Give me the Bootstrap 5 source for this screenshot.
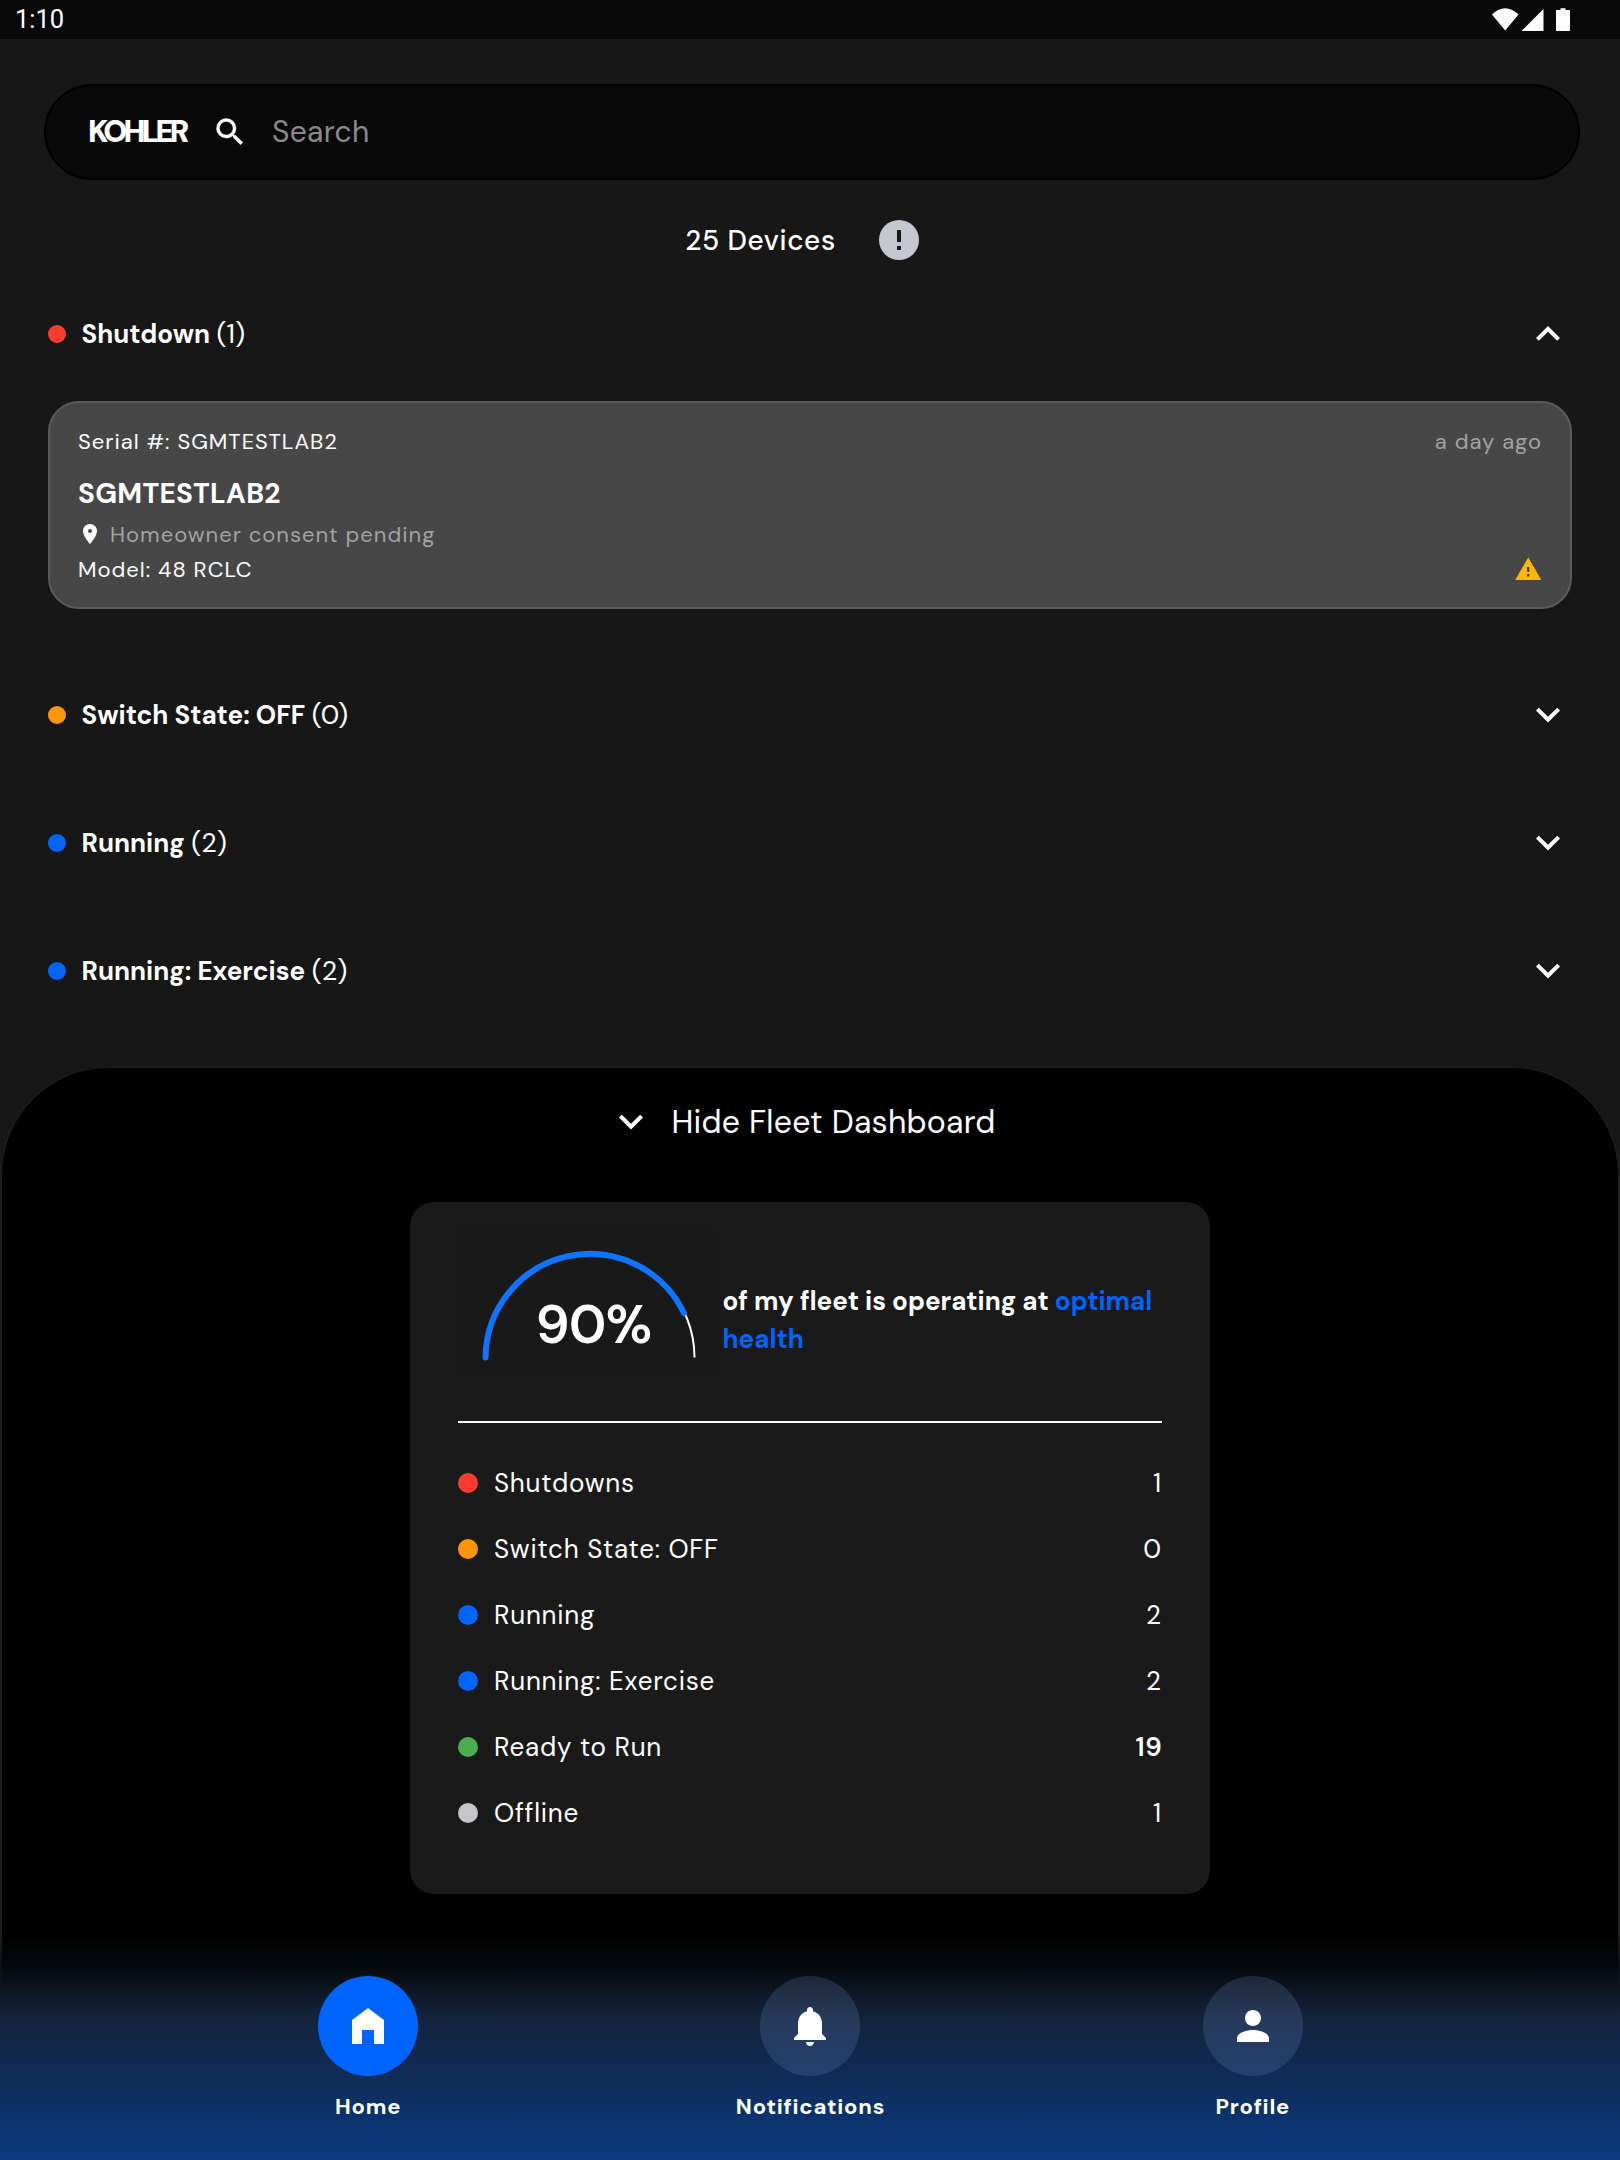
<!DOCTYPE html>
<html lang="en">
<head>
<meta charset="utf-8">
<meta name="viewport" content="width=device-width, initial-scale=1">
<title>Kohler Fleet</title>
<link href="https://cdn.jsdelivr.net/npm/bootstrap@5.3.0/dist/css/bootstrap.min.css" rel="stylesheet">
<style>
body{background:#171717;color:#fff;font-family:"DM Sans",Inter,"Noto Sans",sans-serif;font-size:26px;line-height:1.2;white-space:nowrap}
.screen{width:1620px;height:2160px}
svg{display:block;flex:none}
.status-bar{height:39px;background:#090909;font:400 25.5px/1 Roboto,sans-serif;padding:0 49px 0 15px}
.search-pill{height:96px;margin:45px 40px 0 44px;background:#090909;border:2px solid #000;padding-left:42px}
.search-text{font-size:30px;letter-spacing:.3px;color:#8b8b8b;margin-left:24px}
.brand{width:124px;font-size:30.5px;font-weight:900;letter-spacing:-3.7px}
.summary{height:120px;gap:43px;padding-right:16px;margin-bottom:1px;font-size:28px;font-weight:500;letter-spacing:.62px}
.summary span{padding-top:1px}
.group-head{height:128px;padding:0 48px;font-size:26px}
.group-head.first{height:66px}
.group-head b{margin-left:15.5px;padding-top:2px}
.group-head .count{margin-left:6.5px;font-size:27px;padding-top:1px}
.dot{width:18px;height:18px;border-radius:50%;flex:none}
.dot.big{width:20px;height:20px}
.c-red{background:#ff3b30}.c-orange{background:#ff9500}.c-blue{background:#0064ff}.c-green{background:#4cae4f}.c-grey{background:#c6c6c8}
.device{height:208px;margin:34px 48px 42px;background:#474747;border:2px solid #5b5b5b;border-radius:31px;padding:24px 28px 0;font-size:22px;line-height:30px;letter-spacing:1px;color:#fff}
.device .muted{color:#a3a3a3}
.device .name{font-size:28px;line-height:50px;letter-spacing:.3px;margin-top:12px}
.device .consent{margin-left:8px;padding-top:1px;height:30px}
.device .model{margin-top:5px}
.device .model span{padding-top:1px}
.sheet{background:#000;margin-top:32px;border:2px solid #1d1d1d;border-width:1px 2px 0;border-radius:108px 108px 0 0}
.sheet-head{height:108px;gap:16px;padding-right:17px;font-size:32px;letter-spacing:.26px}
.fleet{width:800px;height:692px;margin:26px auto 0;background:#1a1a1a;border-radius:24px;padding:23px 48px 0}
.gauge-row{height:196px;border-bottom:2px solid #fff;box-sizing:content-box;margin-bottom:27px}
.gauge{margin-left:-1px}
.health-text{font-size:26px;line-height:38px;font-weight:700;padding:57px 0 0 8.5px}
.health-text span{color:#0064ff}
.stat{height:66px;letter-spacing:.78px}
.stat .label{margin-left:16px;padding-top:2px}
.stat .num{letter-spacing:0;margin-right:1px;padding-top:2px}
.stat .num.strong{font-weight:600;letter-spacing:.8px;margin-right:-.5px}
.bottom-bar{height:225px;padding:41px 146px 0 147px;background:linear-gradient(rgba(4,8,14,0) 0,rgba(6,11,17,.8) 32px,#0d1722 56px,#13223a 78px,#112a52 130px,#0c3167 172px,#0b3a82 225px)}
.nav-circle{width:100px;height:100px;background:rgba(130,160,230,.18)}
.nav-circle.on{background:#0064ff}
.nav-label{margin-top:18px;font-size:22px;line-height:26px;font-weight:700;letter-spacing:.78px}
</style>
<script src="https://cdn.jsdelivr.net/npm/bootstrap@5.3.0/dist/js/bootstrap.bundle.min.js"></script>
</head>
<body>
<svg width="0" height="0" class="position-absolute"><defs>
<symbol id="down" viewBox="0 0 24 24"><path d="M7.41 8.34 12 12.92l4.59-4.58L18 9.75l-6 6-6-6z"/></symbol>
<symbol id="up" viewBox="0 0 24 24"><path d="M7.41 15.41 12 10.83l4.59 4.58L18 14l-6-6-6 6z"/></symbol>
</defs></svg>
<div class="screen position-relative overflow-hidden d-flex flex-column">
  <header class="status-bar d-flex align-items-center justify-content-between">
    <span>1:10</span>
    <svg width="79" height="24" viewBox="0 0 79 24" fill="#fff"><path d="M0 6.500Q13 -6 26.500 6.500L13.200 22.500zM29.500 23 51.500 1V23zM64 2.500Q64 2 64.500 2H68.500V.200H73.500V2H77.500Q78 2 78 2.500V22.500Q78 23 77.500 23H64.500Q64 23 64 22.500z"/></svg>
  </header>

  <div class="search-pill rounded-pill d-flex align-items-center">
    <span class="brand">KOHLER</span>
    <svg width="36" height="36" viewBox="0 0 24 24" fill="#fff"><path d="M15.500 14h-.790l-.280-.270A6.471 6.471 0 0 0 16 9.500 6.500 6.500 0 1 0 9.500 16c1.610 0 3.090-.590 4.230-1.570l.270.280v.790l5 4.990L20.490 19zm-6 0C7.010 14 5 11.990 5 9.500S7.010 5 9.500 5 14 7.010 14 9.500 11.990 14 9.500 14z" stroke="#fff" stroke-width=".3"/></svg>
    <span class="search-text">Search</span>
  </div>

  <div class="summary d-flex align-items-center justify-content-center">
    <span>25 Devices</span>
    <svg width="40" height="40" viewBox="0 0 40 40"><circle cx="20" cy="20" r="20" fill="#c6c6d0"/><path d="M18 10h4v12h-4zM18 26h4v4h-4z" fill="#171717"/></svg>
  </div>

  <div class="group-head first d-flex align-items-center">
    <i class="dot c-red"></i><b>Shutdown</b><span class="count">(1)</span>
    <svg class="ms-auto" width="48" height="48" fill="#fff"><use href="#up"/></svg>
  </div>
  <div class="device">
    <div class="d-flex justify-content-between"><span>Serial #: SGMTESTLAB2</span><span class="muted">a day ago</span></div>
    <div class="name fw-bold">SGMTESTLAB2</div>
    <div class="d-flex align-items-center">
      <svg width="24" height="24" viewBox="0 0 24 24" fill="#fff"><path d="M12 2C8.130 2 5 5.130 5 9c0 5.250 7 13 7 13s7-7.750 7-13c0-3.870-3.130-7-7-7zm0 9a2 2 0 1 1 0-4 2 2 0 0 1 0 4z"/></svg>
      <span class="muted consent">Homeowner consent pending</span>
    </div>
    <div class="model d-flex align-items-center justify-content-between"><span>Model: 48 RCLC</span>
      <svg width="28.500" height="28.500" viewBox="0 0 24 24"><path d="M10 9h4v10h-4z" fill="#3a3425"/><path d="M1 21h22L12 2zm11.900-3h-1.800v-2h1.800zm0-4h-1.800v-4h1.800z" fill="#ffb800"/></svg>
    </div>
  </div>
  <div class="group-head d-flex align-items-center">
    <i class="dot c-orange"></i><b>Switch State: OFF</b><span class="count">(0)</span>
    <svg class="ms-auto" width="48" height="48" fill="#fff"><use href="#down"/></svg>
  </div>
  <div class="group-head d-flex align-items-center">
    <i class="dot c-blue"></i><b>Running</b><span class="count">(2)</span>
    <svg class="ms-auto" width="48" height="48" fill="#fff"><use href="#down"/></svg>
  </div>
  <div class="group-head d-flex align-items-center">
    <i class="dot c-blue"></i><b>Running: Exercise</b><span class="count">(2)</span>
    <svg class="ms-auto" width="48" height="48" fill="#fff"><use href="#down"/></svg>
  </div>

  <section class="sheet flex-grow-1">
    <div class="sheet-head d-flex align-items-center justify-content-center">
      <svg width="48" height="48" fill="#fff"><use href="#down"/></svg><span>Hide Fleet Dashboard</span>
    </div>
    <div class="fleet">
      <div class="gauge-row d-flex align-items-start">
        <svg class="gauge" width="257" height="155" viewBox="0 0 257 155">
          <rect width="257" height="155" fill="#191919"/>
          <path d="M28.500 132.500a104.500 105 0 0 1 209 0" fill="none" stroke="#fff" stroke-width="2"/>
          <path d="M28.500 132.500A104.500 105 0 0 1 227 88" fill="none" stroke="#0d75ff" stroke-width="6" stroke-linecap="round"/>
          <text x="136.500" y="118" text-anchor="middle" font-size="54" font-weight="600" letter-spacing="-.9" fill="#fff">90%</text>
        </svg>
        <div class="health-text">of my fleet is operating at <span>optimal</span><br><span>health</span></div>
      </div>
      <div class="stat d-flex align-items-center"><i class="dot big c-red"></i><span class="label">Shutdowns</span><span class="num ms-auto">1</span></div>
      <div class="stat d-flex align-items-center"><i class="dot big c-orange"></i><span class="label">Switch State: OFF</span><span class="num ms-auto">0</span></div>
      <div class="stat d-flex align-items-center"><i class="dot big c-blue"></i><span class="label">Running</span><span class="num ms-auto">2</span></div>
      <div class="stat d-flex align-items-center"><i class="dot big c-blue"></i><span class="label">Running: Exercise</span><span class="num ms-auto">2</span></div>
      <div class="stat d-flex align-items-center"><i class="dot big c-green"></i><span class="label">Ready to Run</span><span class="num strong ms-auto">19</span></div>
      <div class="stat d-flex align-items-center"><i class="dot big c-grey"></i><span class="label">Offline</span><span class="num ms-auto">1</span></div>
    </div>
  </section>

  <nav class="bottom-bar position-absolute bottom-0 start-0 w-100">
    <div class="row g-0 text-center">
      <div class="col-4 d-flex flex-column align-items-center">
        <span class="nav-circle on rounded-circle d-flex align-items-center justify-content-center"><svg width="48" height="48" viewBox="0 0 24 24" fill="#fff"><path d="M4 21V9l8-6 8 6v12h-5v-7H9v7z"/></svg></span>
        <span class="nav-label">Home</span>
      </div>
      <div class="col-4 d-flex flex-column align-items-center">
        <span class="nav-circle rounded-circle d-flex align-items-center justify-content-center"><svg width="48" height="48" viewBox="0 0 24 24" fill="#fff"><path d="M12 22c1.100 0 2-.900 2-2h-4c0 1.100.890 2 2 2zm6-6v-5c0-3.070-1.640-5.640-4.500-6.320V4c0-.830-.670-1.500-1.500-1.500s-1.500.670-1.500 1.500v.680C7.630 5.360 6 7.920 6 11v5l-2 2v1h16v-1z"/></svg></span>
        <span class="nav-label">Notifications</span>
      </div>
      <div class="col-4 d-flex flex-column align-items-center">
        <span class="nav-circle rounded-circle d-flex align-items-center justify-content-center"><svg width="48" height="48" viewBox="0 0 24 24" fill="#fff"><path d="M12 12c2.210 0 4-1.790 4-4s-1.790-4-4-4-4 1.790-4 4 1.790 4 4 4zm0 2c-2.670 0-8 1.340-8 4v2h16v-2c0-2.660-5.330-4-8-4z"/></svg></span>
        <span class="nav-label">Profile</span>
      </div>
    </div>
  </nav>
</div>
</body>
</html>
